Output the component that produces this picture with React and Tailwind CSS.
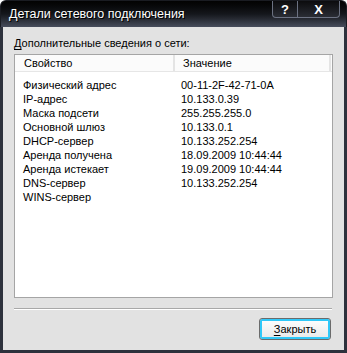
const ROWS = [
    ["Физический адрес", "00-11-2F-42-71-0A"],
    ["IP-адрес", "10.133.0.39"],
    ["Маска подсети", "255.255.255.0"],
    ["Основной шлюз", "10.133.0.1"],
    ["DHCP-сервер", "10.133.252.254"],
    ["Аренда получена", "18.09.2009 10:44:44"],
    ["Аренда истекает", "19.09.2009 10:44:44"],
    ["DNS-сервер", "10.133.252.254"],
    ["WINS-сервер", ""],
];

export default function App() {
    return (
        <div
            className="flex h-[353px] w-[347px] flex-col text-[11px] text-black"
            style={{ fontFamily: '"Liberation Sans", Arial, sans-serif' }}
        >
            {/* Title bar */}
            <div className="relative flex h-[27px] shrink-0 items-end rounded-t-[6px] border-x border-t border-[#1a1c22] bg-gradient-to-b from-[#030303] via-[#15171c] to-[#474d5c] px-2 pb-[3px]">
                <span className="text-[12.5px] text-white [text-shadow:1px_1px_0_#000]">
                    Детали сетевого подключения
                </span>
                <div className="absolute right-[6px] top-0 flex h-[17px] w-[68px] overflow-hidden rounded-b-[4px] border-x border-b border-[#6c7282] bg-gradient-to-b from-[#0c0c0e] to-[#2a2d35]">
                    <div className="flex w-[25px] items-center justify-center border-r border-[#6c7282] text-[13px] font-bold leading-none text-white">
                        ?
                    </div>
                    <div className="flex flex-1 items-center justify-center text-[13px] font-bold leading-none text-white">
                        X
                    </div>
                </div>
            </div>

            {/* Client area */}
            <div className="flex flex-1 flex-col border-x-[3px] border-b-[3px] border-[#2d313c] bg-[#e2e2e2] px-[11px] pt-[9px]">
                <div className="leading-[14px]">
                    <span className="underline underline-offset-2">Д</span>ополнительные сведения о сети:
                </div>

                <div className="mt-[4px] h-[244px] w-[319px] border border-[#a5a5a5] bg-white">
                    <div className="flex h-[17px] border-b border-[#e6e6e6] bg-[#fbfbfb] leading-[17px]">
                        <div className="w-[160px] border-r-2 border-[#e4e4e4] pl-[9px]">
                            Свойство
                        </div>
                        <div className="w-[156px] border-r-2 border-[#e4e4e4] pl-[8px]">
                            Значение
                        </div>
                    </div>
                    <div className="pt-[6px]">
                        {ROWS.map(([name, value]) => (
                            <div key={name} className="flex h-[14px] leading-[14px]">
                                <div className="w-[162px] pl-[8px]">{name}</div>
                                <div className="pl-[4px]">{value}</div>
                            </div>
                        ))}
                    </div>
                </div>

                <div className="mt-[10px] h-[2px] w-[318px] border-t border-b border-t-[#a8a8a8] border-b-white" />

                <div className="mt-[8px] flex justify-end pr-[2px]">
                    <button className="flex h-[22px] w-[72px] items-center justify-center rounded-[3px] border border-[#6b6b6b] bg-gradient-to-b from-white to-[#e8e8e8] shadow-[inset_0_0_0_2px_#30c8f8]">
                        <span className="underline underline-offset-2">З</span>акрыть
                    </button>
                </div>
            </div>
        </div>
    );
}
